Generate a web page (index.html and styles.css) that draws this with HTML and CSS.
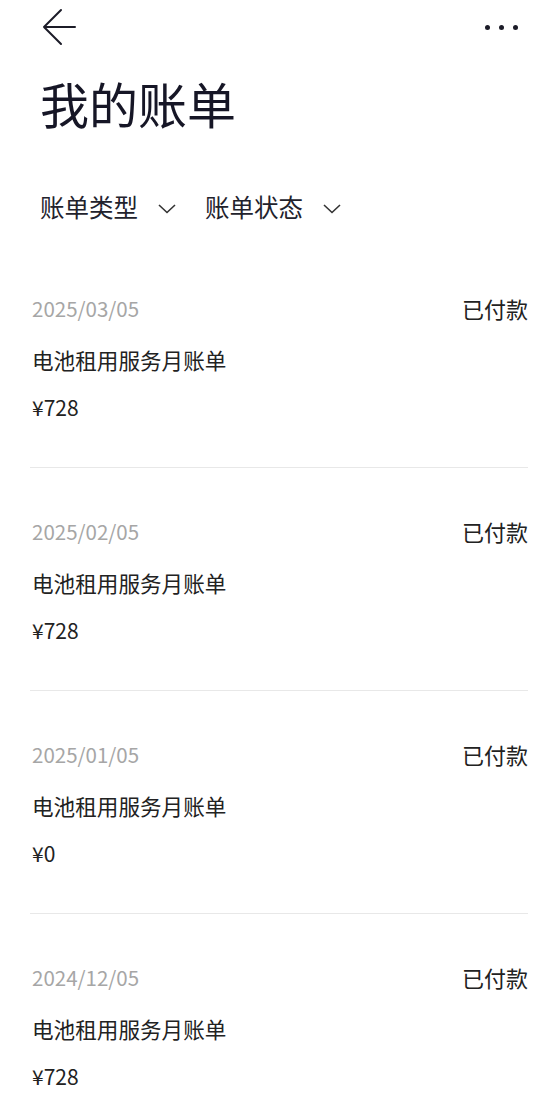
FILE: index.html
```html
<!DOCTYPE html>
<html lang="zh-CN">
<head>
    <meta charset="UTF-8">
    <meta name="viewport" content="width=device-width, initial-scale=1.0">
    <title>我的账单</title>
    <link rel="stylesheet" href="styles.css">
</head>
<body>
    <div class="top-bar">
        <a href="#" class="back-btn">
            <svg width="40" height="40" viewBox="0 0 40 40">
                <path d="M21 10 L4 27 L21 44 M4 27 L35 27" transform="translate(0 -7)" fill="none" stroke="#1c1c28" stroke-width="2" stroke-linecap="round" stroke-linejoin="round"/>
            </svg>
        </a>
        <div class="more-btn">
            <span></span><span></span><span></span>
        </div>
    </div>

    <h1 class="page-title">我的账单</h1>

    <div class="filters">
        <div class="filter">账单类型
            <svg width="18" height="10" viewBox="0 0 18 10"><path d="M1 1 L9 8.5 L17 1" fill="none" stroke="#333" stroke-width="1.6"/></svg>
        </div>
        <div class="filter">账单状态
            <svg width="18" height="10" viewBox="0 0 18 10"><path d="M1 1 L9 8.5 L17 1" fill="none" stroke="#333" stroke-width="1.6"/></svg>
        </div>
    </div>

    <div class="bill-list">
        <div class="bill">
            <div class="bill-head">
                <span class="bill-date">2025/03/05</span>
                <span class="bill-status">已付款</span>
            </div>
            <div class="bill-name">电池租用服务月账单</div>
            <div class="bill-amount">¥728</div>
        </div>
        <div class="bill">
            <div class="bill-head">
                <span class="bill-date">2025/02/05</span>
                <span class="bill-status">已付款</span>
            </div>
            <div class="bill-name">电池租用服务月账单</div>
            <div class="bill-amount">¥728</div>
        </div>
        <div class="bill">
            <div class="bill-head">
                <span class="bill-date">2025/01/05</span>
                <span class="bill-status">已付款</span>
            </div>
            <div class="bill-name">电池租用服务月账单</div>
            <div class="bill-amount">¥0</div>
        </div>
        <div class="bill">
            <div class="bill-head">
                <span class="bill-date">2024/12/05</span>
                <span class="bill-status">已付款</span>
            </div>
            <div class="bill-name">电池租用服务月账单</div>
            <div class="bill-amount">¥728</div>
        </div>
    </div>
</body>
</html>
```

FILE: styles.css
```css
body {
    font-family: "Noto Sans CJK SC", "Noto Sans", sans-serif;
    background-color: #ffffff;
    color: #222222;
    margin: 0;
    padding: 0;
    overflow: hidden;
}
.top-bar {
    height: 56px;
    display: flex;
    justify-content: space-between;
    align-items: center;
    padding: 0 42px 0 40px;
}
.back-btn {
    display: flex;
    width: 40px;
    height: 40px;
    margin-top: -2px;
}
.more-btn {
    display: flex;
    gap: 9px;
    margin-top: -2px;
}
.more-btn span {
    width: 5px;
    height: 5px;
    border-radius: 50%;
    background-color: #1c1c28;
}
.page-title {
    margin: 17px 0 0 40px;
    font-size: 49px;
    line-height: 60px;
    font-weight: 400;
    color: #161626;
}
.filters {
    display: flex;
    gap: 29px;
    margin: 53px 0 0 40px;
    height: 40px;
    align-items: center;
}
.filter {
    display: flex;
    align-items: center;
    gap: 20px;
    font-size: 24.5px;
    color: #22222c;
}
.filter svg {
    margin-top: 6px;
}
.bill-list {
    margin: 19px 32px 0 30px;
}
.bill {
    padding: 48px 0 45px 2px;
    border-bottom: 1px solid #e8e8e8;
}
.bill-head {
    display: flex;
    justify-content: space-between;
    align-items: center;
    height: 30px;
}
.bill-date {
    font-size: 20.5px;
    color: #a6a6a6;
}
.bill-status {
    font-size: 22px;
    color: #222222;
}
.bill-name {
    margin-top: 22px;
    font-size: 21.6px;
    line-height: 30px;
}
.bill-amount {
    margin-top: 17px;
    font-size: 21px;
    line-height: 30px;
}
```
